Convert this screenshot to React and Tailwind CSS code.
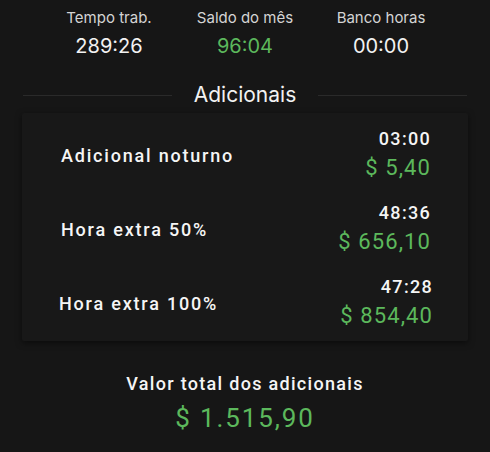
export default function App() {
  const rows = [
    { label: "Adicional noturno", time: "03:00", value: "$ 5,40" },
    { label: "Hora extra 50%", time: "48:36", value: "$ 656,10" },
    { label: "Hora extra 100%", time: "47:28", value: "$ 854,40" },
  ];
  const stats = [
    { label: "Tempo trab.", value: "289:26", green: false },
    { label: "Saldo do mês", value: "96:04", green: true },
    { label: "Banco horas", value: "00:00", green: false },
  ];
  return (
    <div className="w-[490px] h-[452px] bg-[#161616] overflow-hidden flex flex-col">
      <div className="mx-auto w-[408px] grid grid-cols-3 pt-[8px] font-['Inter',sans-serif]">
        {stats.map((s) => (
          <div key={s.label} className="flex flex-col items-center">
            <div className="text-[15px] leading-[20px] text-[#d4d4d4]">{s.label}</div>
            <div className={`text-[20px] leading-[28px] mt-[4px] ${s.green ? "text-[#5cb85c]" : "text-[#f2f2f2]"}`}>{s.value}</div>
          </div>
        ))}
      </div>
      <div className="mt-[22px] mx-[23px] flex items-center font-['Inter',sans-serif]">
        <div className="flex-1 h-px bg-[#2a2a2a]" />
        <div className="px-[22px] text-[21px] leading-[26px] text-[#f2f2f2]">Adicionais</div>
        <div className="flex-1 h-px bg-[#2a2a2a]" />
      </div>
      <div className="mt-[5px] mx-[22px] bg-[#181818] shadow-[0_2px_6px_rgba(0,0,0,0.5)] rounded-[2px] pt-[5px] pb-[1px] font-['Roboto',sans-serif]">
        {rows.map((r, i) => (
          <div key={r.label} className={`flex items-center justify-between h-[74px] ${i === 2 ? "pl-[37px] pr-[36px]" : "pl-[39px] pr-[38px]"}`}>
            <div className="text-[18px] leading-[24px] mt-[1px] font-medium tracking-[1.8px] text-[#f5f5f5]">{r.label}</div>
            <div className="flex flex-col items-end">
              <div className="text-[18px] leading-[22px] font-medium tracking-[1.3px] mr-[-1px] text-[#f5f5f5]">{r.time}</div>
              <div className="text-[22px] leading-[28px] mt-[4px] tracking-[1.1px] mr-[-1px] text-[#5cb85c]">{r.value}</div>
            </div>
          </div>
        ))}
      </div>
      <div className="mt-[32px] flex flex-col items-center font-['Roboto',sans-serif]">
        <div className="text-[18px] leading-[22px] font-medium tracking-[1.3px] text-[#f5f5f5]">Valor total dos adicionais</div>
        <div className="text-[26px] leading-[32px] mt-[7px] tracking-[1.9px] text-[#5cb85c]">$ 1.515,90</div>
      </div>
    </div>
  );
}
